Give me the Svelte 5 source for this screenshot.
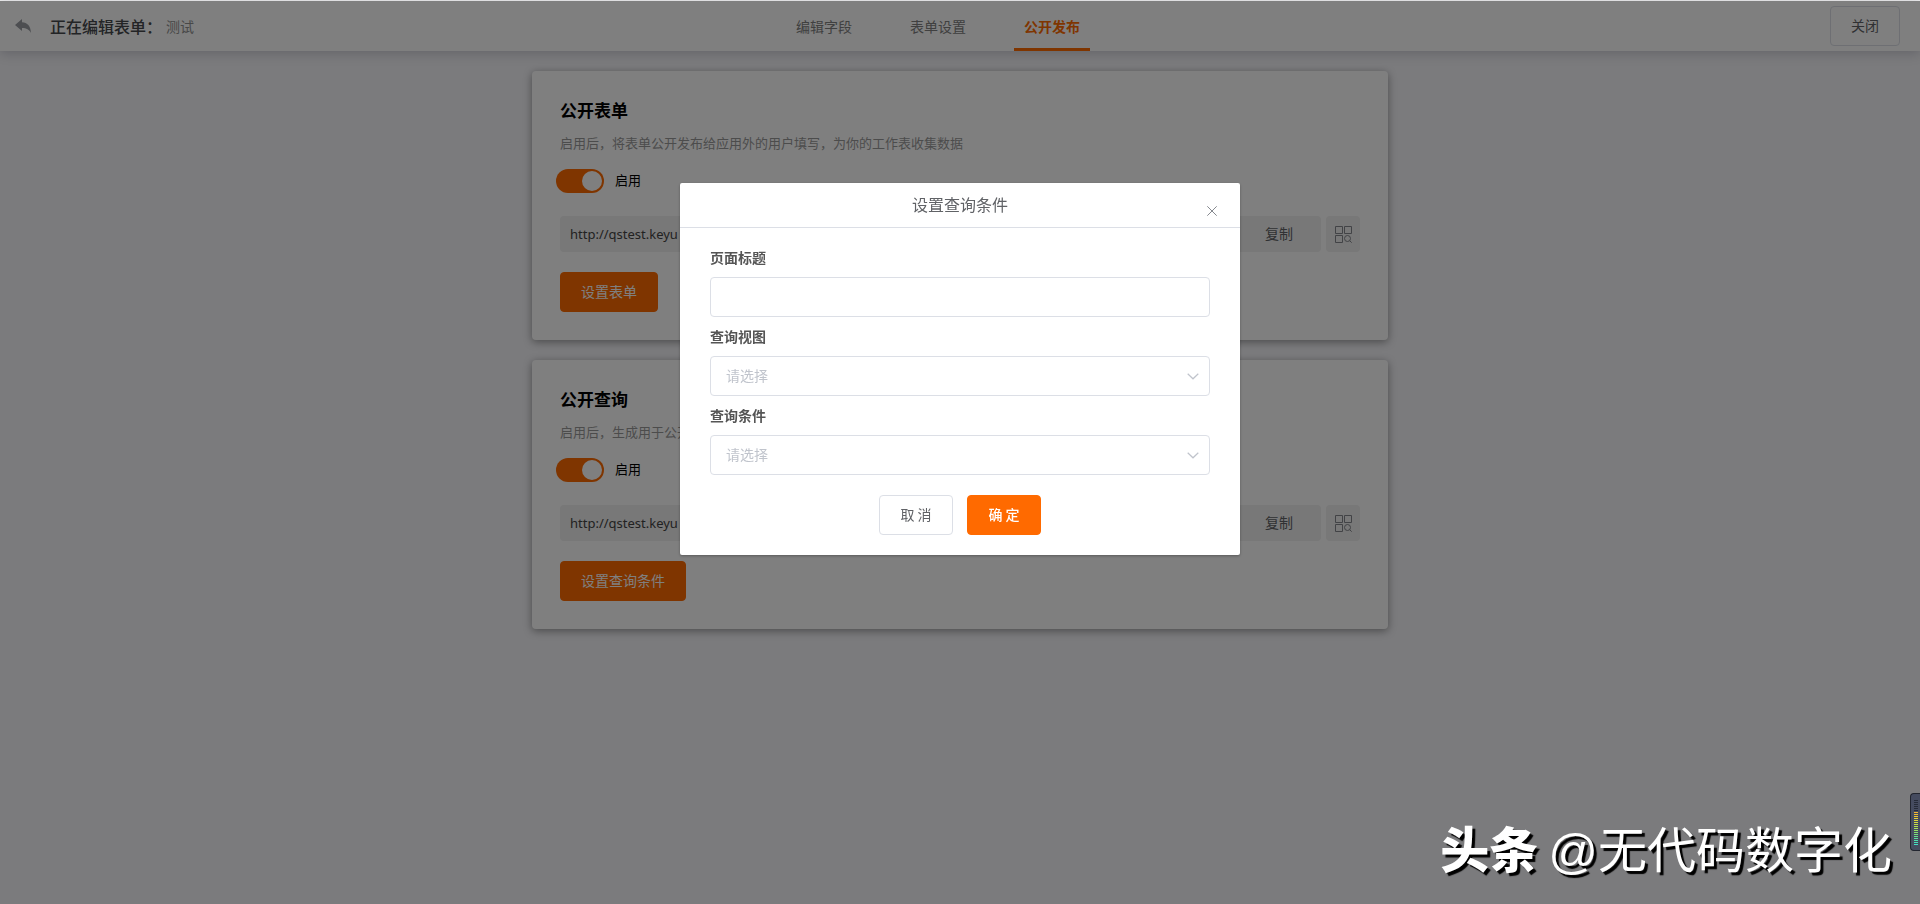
<script>
  const tabs = ['编辑字段', '表单设置', '公开发布'];
  let activeTab = $state('公开发布');

  let cards = $state([
    {
      id: 'form',
      title: '公开表单',
      desc: '启用后，将表单公开发布给应用外的用户填写，为你的工作表收集数据',
      enabled: true,
      url: 'http://qstest.keyu',
      action: '设置表单'
    },
    {
      id: 'query',
      title: '公开查询',
      desc: '启用后，生成用于公开',
      enabled: true,
      url: 'http://qstest.keyu',
      action: '设置查询条件'
    }
  ]);

  const meter = [
    '#262b38', '#262b38', '#262b38', '#262b38', '#262b38', '#262b38',
    '#f5b731', '#f0bf31', '#ecc832', '#e6d234', '#dcd83a', '#d0dc40',
    '#c3df48', '#b5e150', '#a6e258', '#96e262', '#86e16e', '#76e07c',
    '#68df8c', '#5cdf9c', '#50dfac', '#48dfba', '#42dfc6'
  ];

  let pageTitle = $state('');
  let view = $state('');
  let condition = $state('');
</script>

<div class="page">
  <header>
    <div class="left">
      <button class="back" aria-label="返回">
        <svg width="16" height="14" viewBox="0 0 16 14"><path d="M7 0v3.2c5.4.3 8.6 3.600 9 10.800C14.200 10.400 11.500 8.900 7 8.900V12L0 6z" fill="#9a9da3" /></svg>
      </button>
      <span class="editing">正在编辑表单：</span>
      <span class="name">测试</span>
    </div>
    <nav>
      {#each tabs as tab}
        <button class="tab" class:active={tab === activeTab} onclick={() => (activeTab = tab)}>{tab}</button>
      {/each}
    </nav>
    <div class="right"><button class="btn">关闭</button></div>
  </header>

  <main>
    {#each cards as card (card.id)}
      <section class="card">
        <h2>{card.title}</h2>
        <p>{card.desc}</p>
        <label class="switch">
          <input type="checkbox" bind:checked={card.enabled} />
          <span>启用</span>
        </label>
        <div class="link-row">
          <div class="link">
            <span class="url">{card.url}</span>
            <button class="copy">复制</button>
          </div>
          <button class="qr" aria-label="二维码">
            <svg width="17" height="17" viewBox="0 0 17 17" fill="none" stroke="#85878c">
              <path d="M.5.5h7v7h-7zM9.500.5h7v7h-7zM.5 9.500h7v7h-7z" />
              <circle cx="12.500" cy="12.500" r="3" />
              <path d="M14.600 14.600l2.100 2.100" />
            </svg>
          </button>
        </div>
        <button class="btn primary">{card.action}</button>
      </section>
    {/each}
  </main>
</div>

<div class="overlay">
  <div class="dialog" role="dialog" aria-modal="true" aria-labelledby="dialog-title">
    <div class="dialog-head">
      <h1 id="dialog-title">设置查询条件</h1>
      <button class="close" aria-label="关闭">
        <svg width="10" height="10" viewBox="0 0 10 10" stroke="#85888e" fill="none"><path d="M.3.3l9.400 9.400M9.700.3L.3 9.700" /></svg>
      </button>
    </div>
    <form onsubmit={(e) => e.preventDefault()}>
      <label for="page-title">页面标题</label>
      <input id="page-title" type="text" bind:value={pageTitle} />
      <label for="view">查询视图</label>
      <div class="select">
        <select id="view" bind:value={view}><option value="">请选择</option></select>
        <svg width="12" height="7" viewBox="0 0 12 7"><path d="M.7.7L6 5.800 11.300.7" fill="none" stroke="#c0c4cc" stroke-width="1.200" /></svg>
      </div>
      <label for="condition">查询条件</label>
      <div class="select">
        <select id="condition" bind:value={condition}><option value="">请选择</option></select>
        <svg width="12" height="7" viewBox="0 0 12 7"><path d="M.7.7L6 5.800 11.300.7" fill="none" stroke="#c0c4cc" stroke-width="1.200" /></svg>
      </div>
      <div class="actions">
        <button type="button" class="btn">取 消</button>
        <button type="submit" class="btn primary strong">确 定</button>
      </div>
    </form>
  </div>
</div>

<div class="watermark"><b>头条</b><span>@无代码数字化</span></div>

<div class="meter">
  {#each meter as color}<i style="background: {color}"></i>{/each}
</div>

<style>
  :global(body) {
    background: #f6f6fa;
    font-family: 'Noto Sans CJK SC', sans-serif;
    font-size: 14px;
    color: #606266;
  }
  button, input, select {
    font: inherit;
    color: inherit;
    box-sizing: border-box;
    margin: 0;
  }
  button {
    padding: 0;
    border: 0;
    background: none;
    cursor: pointer;
  }
  svg { display: block; }
  .page {
    min-height: 100vh;
    box-sizing: border-box;
    border-top: 1px solid #eee;
  }
  header {
    height: 50px;
    display: grid;
    grid-template-columns: 1fr auto 1fr;
    align-items: center;
    padding: 0 20px 0 15px;
    background: #fff;
    box-shadow: 0 2px 12px rgba(0, 0, 40, 0.2);
  }
  .left {
    display: flex;
    align-items: center;
    line-height: 24px;
  }
  .editing {
    margin-left: 19px;
    font-size: 16px;
    font-weight: 500;
    color: #46484c;
  }
  .name {
    margin-left: 4px;
    color: #909090;
  }
  nav {
    height: 50px;
    display: flex;
    gap: 38px;
    padding-right: 39px;
  }
  .tab {
    padding: 0 10px;
    border-top: 3px solid transparent;
    border-bottom: 3px solid transparent;
    color: #808080;
  }
  .tab.active {
    color: #ff6a00;
    font-weight: 700;
    border-bottom-color: #ff6a00;
  }
  .right {
    display: flex;
    justify-content: flex-end;
  }
  .btn {
    height: 40px;
    min-width: 70px;
    padding: 0 20px 2px;
    border: 1px solid #dcdfe6;
    border-radius: 4px;
    background: #fff;
  }
  .btn.primary {
    border-color: #ff6a00;
    background: #ff6a00;
    color: #fff;
  }
  .btn.strong { font-weight: 500; }
  main {
    max-width: 856px;
    margin: 20px auto;
    display: flex;
    flex-direction: column;
    gap: 20px;
  }
  .card {
    padding: 27px 28px 28px;
    border-radius: 4px;
    background: #fff;
    box-shadow: 0 2px 8px rgba(0, 0, 0, 0.4);
  }
  h2 {
    margin: 0;
    font-size: 17px;
    line-height: 24px;
    color: #000;
  }
  p {
    margin: 11px 0 16px;
    font-size: 13px;
    line-height: 20px;
    color: #999;
  }
  .switch {
    display: flex;
    align-items: center;
    gap: 11px;
    width: max-content;
    margin-left: -4px;
    font-size: 13px;
    line-height: 22px;
    color: #000;
  }
  .switch span { padding-bottom: 2px; }
  .switch input {
    appearance: none;
    width: 48px;
    height: 24px;
    padding: 2px;
    border-radius: 12px;
    background: #c0c4cc;
    display: flex;
  }
  .switch input::before {
    content: '';
    width: 20px;
    height: 20px;
    border-radius: 50%;
    background: #fff;
  }
  .switch input:checked {
    background: #ff6a00;
    justify-content: flex-end;
  }
  .link-row {
    display: flex;
    gap: 5px;
    margin: 23px 0 20px;
  }
  .link {
    flex: 1;
    display: flex;
    align-items: center;
    justify-content: space-between;
    height: 36px;
    padding-left: 10px;
    border-radius: 4px;
    background: #f0f0f0;
  }
  .url {
    font-family: 'Noto Sans', 'Noto Sans CJK SC', sans-serif;
    font-size: 13px;
    color: #444;
  }
  .copy {
    height: 36px;
    padding: 0 28px 2px;
  }
  .qr {
    width: 34px;
    height: 36px;
    display: grid;
    place-items: center;
    border-radius: 4px;
    background: #f0f0f0;
  }
  .overlay {
    position: fixed;
    inset: 1px 0 0;
    display: flex;
    justify-content: center;
    align-items: flex-start;
    background: rgba(0, 0, 0, 0.5);
  }
  .dialog {
    width: 560px;
    margin-top: 182px;
    border-radius: 2px;
    background: #fff;
    box-shadow: 0 1px 3px rgba(0, 0, 0, 0.3);
  }
  .dialog-head {
    position: relative;
    height: 44px;
    border-bottom: 1px solid #dcdfe6;
    text-align: center;
  }
  h1 {
    margin: 0;
    font-size: 16px;
    font-weight: 400;
    line-height: 42px;
  }
  .close {
    position: absolute;
    right: 20px;
    top: 20px;
    padding: 3px;
  }
  form {
    display: flex;
    flex-direction: column;
    padding: 19px 30px 20px;
  }
  form label {
    margin-bottom: 10px;
    font-weight: 700;
    line-height: 20px;
    color: #555;
  }
  form input, select {
    width: 100%;
    height: 40px;
    padding: 0 15px 2px;
    border: 1px solid #dcdfe6;
    border-radius: 4px;
    background: #fff;
  }
  form input { margin-bottom: 9px; }
  .select {
    display: grid;
    align-items: center;
    margin-bottom: 9px;
  }
  select {
    grid-area: 1 / 1;
    appearance: none;
    color: #c0c4cc;
  }
  .select svg {
    grid-area: 1 / 1;
    justify-self: end;
    margin-right: 11px;
    pointer-events: none;
  }
  .actions {
    display: flex;
    justify-content: center;
    gap: 14px;
    margin-top: 11px;
  }
  .actions .btn { min-width: 74px; }
  .watermark {
    position: fixed;
    right: 28px;
    bottom: 17px;
    display: flex;
    align-items: baseline;
    gap: 10px;
    font-family: 'Liberation Sans', 'Noto Sans CJK SC', sans-serif;
    font-size: 49px;
    line-height: 72px;
    color: #fff;
    text-shadow: 3px 3px 1px #000;
    white-space: nowrap;
  }
  .watermark b {
    font-family: 'Noto Sans CJK SC', sans-serif;
    font-weight: 900;
  }
  .meter {
    position: fixed;
    right: 0;
    bottom: 53px;
    display: flex;
    flex-direction: column;
    gap: 1px;
    padding: 6px 2px 5px 3px;
    border: 1px solid #22252f;
    border-right: 0;
    border-radius: 4px 0 0 4px;
    background: #454b5f;
  }
  .meter i {
    width: 4px;
    height: 1px;
  }
</style>
